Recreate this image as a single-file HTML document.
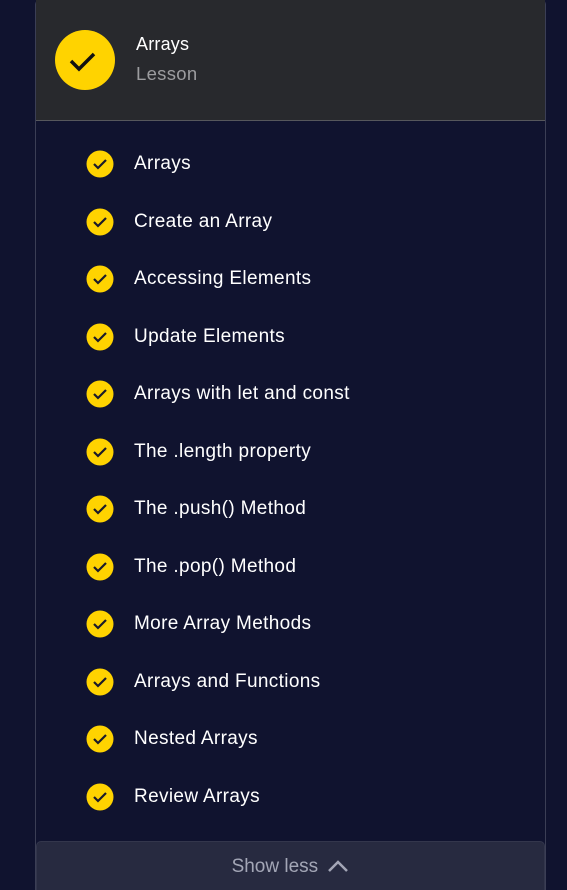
<!DOCTYPE html><html><head><style>
html,body{margin:0;width:567px;height:890px;overflow:hidden}
body{background:#10132f;font-family:"Liberation Sans",sans-serif;position:relative}
.card{position:absolute;left:35px;top:-1px;width:509px;height:895px;border:1px solid #3b3e55;border-radius:6px}
.hd{position:absolute;left:36px;top:0;width:509px;height:120px;background:#28292d;border-bottom:1px solid #56575c}
.big{position:absolute;left:55px;top:30px}
.t1{position:absolute;left:136px;top:34px;color:#fff;font-size:18px;letter-spacing:0.2px}
.t2{position:absolute;left:136px;top:63px;color:#9c9c9f;font-size:18.5px;letter-spacing:0.3px}
.it{position:absolute;left:86px;height:28px;display:flex;align-items:center;color:#fff;font-size:19px;letter-spacing:0.35px}
.it svg{margin-right:20px}
.sl{position:absolute;left:36px;top:841px;width:509px;height:49px;background:#272a40;border-radius:5px 5px 0 0;border:1px solid #33364c;border-bottom:none;box-sizing:border-box;color:#a3a6b6;font-size:19px;text-align:center;padding-top:14px}
</style></head><body>
<div class="card"></div>
<div class="hd"></div>
<svg class="big" width="60" height="60"><circle cx="30" cy="30" r="30" fill="#ffd300"/><path d="M16 31l8 8 15-15" stroke="#111" stroke-width="3.5" fill="none"/></svg>
<div class="t1">Arrays</div><div class="t2">Lesson</div>
<div class="it" style="top:150px"><svg width="28" height="28"><circle cx="14" cy="14" r="13.5" fill="#ffd300"/><path d="M8 14l4 4 8-8" stroke="#1a1a2a" stroke-width="2.2" fill="none"/></svg>Arrays</div>
<div class="it" style="top:208px"><svg width="28" height="28"><circle cx="14" cy="14" r="13.5" fill="#ffd300"/><path d="M8 14l4 4 8-8" stroke="#1a1a2a" stroke-width="2.2" fill="none"/></svg>Create an Array</div>
<div class="it" style="top:265px"><svg width="28" height="28"><circle cx="14" cy="14" r="13.5" fill="#ffd300"/><path d="M8 14l4 4 8-8" stroke="#1a1a2a" stroke-width="2.2" fill="none"/></svg>Accessing Elements</div>
<div class="it" style="top:323px"><svg width="28" height="28"><circle cx="14" cy="14" r="13.5" fill="#ffd300"/><path d="M8 14l4 4 8-8" stroke="#1a1a2a" stroke-width="2.2" fill="none"/></svg>Update Elements</div>
<div class="it" style="top:380px"><svg width="28" height="28"><circle cx="14" cy="14" r="13.5" fill="#ffd300"/><path d="M8 14l4 4 8-8" stroke="#1a1a2a" stroke-width="2.2" fill="none"/></svg>Arrays with let and const</div>
<div class="it" style="top:438px"><svg width="28" height="28"><circle cx="14" cy="14" r="13.5" fill="#ffd300"/><path d="M8 14l4 4 8-8" stroke="#1a1a2a" stroke-width="2.2" fill="none"/></svg>The .length property</div>
<div class="it" style="top:495px"><svg width="28" height="28"><circle cx="14" cy="14" r="13.5" fill="#ffd300"/><path d="M8 14l4 4 8-8" stroke="#1a1a2a" stroke-width="2.2" fill="none"/></svg>The .push() Method</div>
<div class="it" style="top:553px"><svg width="28" height="28"><circle cx="14" cy="14" r="13.5" fill="#ffd300"/><path d="M8 14l4 4 8-8" stroke="#1a1a2a" stroke-width="2.2" fill="none"/></svg>The .pop() Method</div>
<div class="it" style="top:610px"><svg width="28" height="28"><circle cx="14" cy="14" r="13.5" fill="#ffd300"/><path d="M8 14l4 4 8-8" stroke="#1a1a2a" stroke-width="2.2" fill="none"/></svg>More Array Methods</div>
<div class="it" style="top:668px"><svg width="28" height="28"><circle cx="14" cy="14" r="13.5" fill="#ffd300"/><path d="M8 14l4 4 8-8" stroke="#1a1a2a" stroke-width="2.2" fill="none"/></svg>Arrays and Functions</div>
<div class="it" style="top:725px"><svg width="28" height="28"><circle cx="14" cy="14" r="13.5" fill="#ffd300"/><path d="M8 14l4 4 8-8" stroke="#1a1a2a" stroke-width="2.2" fill="none"/></svg>Nested Arrays</div>
<div class="it" style="top:783px"><svg width="28" height="28"><circle cx="14" cy="14" r="13.5" fill="#ffd300"/><path d="M8 14l4 4 8-8" stroke="#1a1a2a" stroke-width="2.2" fill="none"/></svg>Review Arrays</div>
<div class="sl">Show less <svg width="22" height="14" style="vertical-align:-1px;margin-left:4px"><path d="M2 12l9-9 9 9" stroke="#a3a6b6" stroke-width="2.5" fill="none"/></svg></div>
</body></html>
